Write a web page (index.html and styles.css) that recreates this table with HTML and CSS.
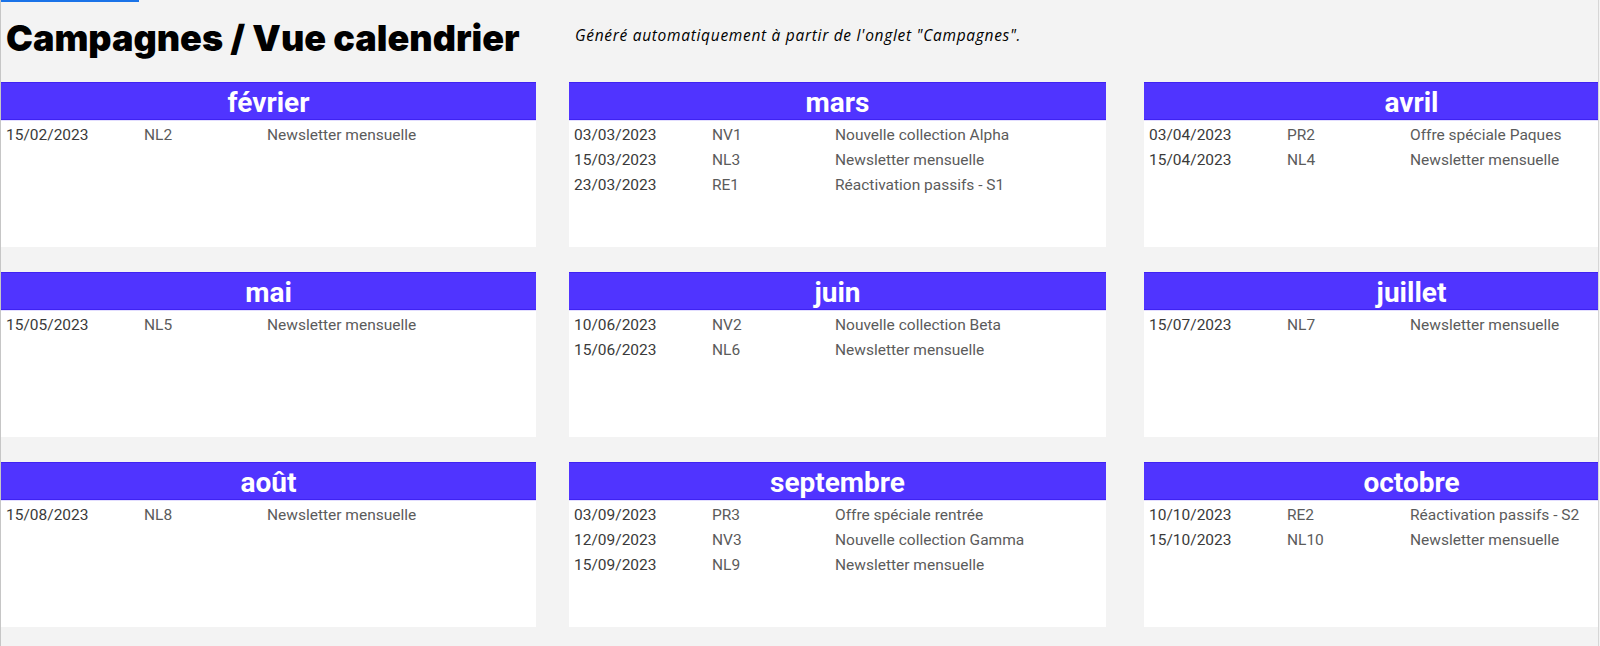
FILE: index.html
```html
<!DOCTYPE html>
<html lang="fr">
<head>
<meta charset="utf-8">
<title>Campagnes / Vue calendrier</title>
<link rel="stylesheet" href="styles.css">
</head>
<body>
<div class="sheet">
  <div class="tab-indicator"></div>
  <header class="title-row">
    <h1 class="title">Campagnes / Vue calendrier</h1>
    <p class="subtitle">Généré automatiquement à partir de l'onglet "Campagnes".</p>
  </header>
  <main class="calendar">
    <section class="month">
      <h2 class="month-name">février</h2>
      <div class="rows">
        <div class="row"><span class="date">15/02/2023</span><span class="code">NL2</span><span class="name">Newsletter mensuelle</span></div>
      </div>
    </section>
    <section class="month">
      <h2 class="month-name">mars</h2>
      <div class="rows">
        <div class="row"><span class="date">03/03/2023</span><span class="code">NV1</span><span class="name">Nouvelle collection Alpha</span></div>
        <div class="row"><span class="date">15/03/2023</span><span class="code">NL3</span><span class="name">Newsletter mensuelle</span></div>
        <div class="row"><span class="date">23/03/2023</span><span class="code">RE1</span><span class="name">Réactivation passifs - S1</span></div>
      </div>
    </section>
    <section class="month last">
      <h2 class="month-name">avril</h2>
      <div class="rows">
        <div class="row"><span class="date">03/04/2023</span><span class="code">PR2</span><span class="name">Offre spéciale Paques</span></div>
        <div class="row"><span class="date">15/04/2023</span><span class="code">NL4</span><span class="name">Newsletter mensuelle</span></div>
      </div>
    </section>

    <section class="month">
      <h2 class="month-name">mai</h2>
      <div class="rows">
        <div class="row"><span class="date">15/05/2023</span><span class="code">NL5</span><span class="name">Newsletter mensuelle</span></div>
      </div>
    </section>
    <section class="month">
      <h2 class="month-name">juin</h2>
      <div class="rows">
        <div class="row"><span class="date">10/06/2023</span><span class="code">NV2</span><span class="name">Nouvelle collection Beta</span></div>
        <div class="row"><span class="date">15/06/2023</span><span class="code">NL6</span><span class="name">Newsletter mensuelle</span></div>
      </div>
    </section>
    <section class="month last">
      <h2 class="month-name">juillet</h2>
      <div class="rows">
        <div class="row"><span class="date">15/07/2023</span><span class="code">NL7</span><span class="name">Newsletter mensuelle</span></div>
      </div>
    </section>

    <section class="month">
      <h2 class="month-name">août</h2>
      <div class="rows">
        <div class="row"><span class="date">15/08/2023</span><span class="code">NL8</span><span class="name">Newsletter mensuelle</span></div>
      </div>
    </section>
    <section class="month">
      <h2 class="month-name">septembre</h2>
      <div class="rows">
        <div class="row"><span class="date">03/09/2023</span><span class="code">PR3</span><span class="name">Offre spéciale rentrée</span></div>
        <div class="row"><span class="date">12/09/2023</span><span class="code">NV3</span><span class="name">Nouvelle collection Gamma</span></div>
        <div class="row"><span class="date">15/09/2023</span><span class="code">NL9</span><span class="name">Newsletter mensuelle</span></div>
      </div>
    </section>
    <section class="month last">
      <h2 class="month-name">octobre</h2>
      <div class="rows">
        <div class="row"><span class="date">10/10/2023</span><span class="code">RE2</span><span class="name">Réactivation passifs - S2</span></div>
        <div class="row"><span class="date">15/10/2023</span><span class="code">NL10</span><span class="name">Newsletter mensuelle</span></div>
      </div>
    </section>
  </main>
</div>
</body>
</html>
```

FILE: styles.css
```css
* {
  box-sizing: border-box;
}

html, body {
  margin: 0;
  padding: 0;
  background: #f3f3f3;
}

body {
  font-family: Roboto, "Liberation Sans", sans-serif;
}

.sheet {
  width: 1599px;
  height: 646px;
  overflow: hidden;
  border-left: 1px solid #c6c6c6;
  border-right: 1px solid #d6d6d6;
  background: #f3f3f3;
}

.tab-indicator {
  width: 139px;
  height: 2px;
  margin-left: -1px;
  background: #1a73e8;
}

.title-row {
  height: 80px;
  display: flex;
  align-items: center;
  padding-left: 5px;
  padding-bottom: 8px;
}

.title {
  margin: 0;
  font-family: Inter, "DejaVu Sans", sans-serif;
  font-weight: 900;
  font-size: 36px;
  line-height: 44px;
  color: #000;
  width: 569px;
  flex: none;
}

.subtitle {
  margin: 0;
  font-family: "Open Sans", "DejaVu Sans", sans-serif;
  font-style: italic;
  font-size: 15.5px;
  letter-spacing: 0.7px;
  color: #000;
  padding-bottom: 6px;
}

.calendar {
  display: grid;
  grid-template-columns: 535px 537px 540px;
  grid-auto-rows: 165px;
  column-gap: 33px;
  row-gap: 25px;
}

.month {
  background: #fff;
  display: flex;
  flex-direction: column;
}

.month.last {
  margin-left: 5px;
}

.month-name {
  margin: 0;
  height: 38px;
  padding-top: 1px;
  background: #5034ff;
  border-top: 1px solid #3f22f2;
  border-bottom: 1px solid #3f22f2;
  color: #fff;
  font-family: Roboto, "Liberation Sans", sans-serif;
  font-weight: 700;
  font-size: 28px;
  line-height: 37px;
  text-align: center;
}

.rows {
  border-top: 1px solid #e3deff;
  padding-top: 2px;
}

.row {
  display: grid;
  grid-template-columns: 138px 123px 1fr;
  padding-left: 5px;
  height: 25px;
  line-height: 24px;
  font-size: 15.5px;
  white-space: nowrap;
}

.date {
  color: #3a3a3a;
}

.code,
.name {
  color: #5b5b5b;
}
```
